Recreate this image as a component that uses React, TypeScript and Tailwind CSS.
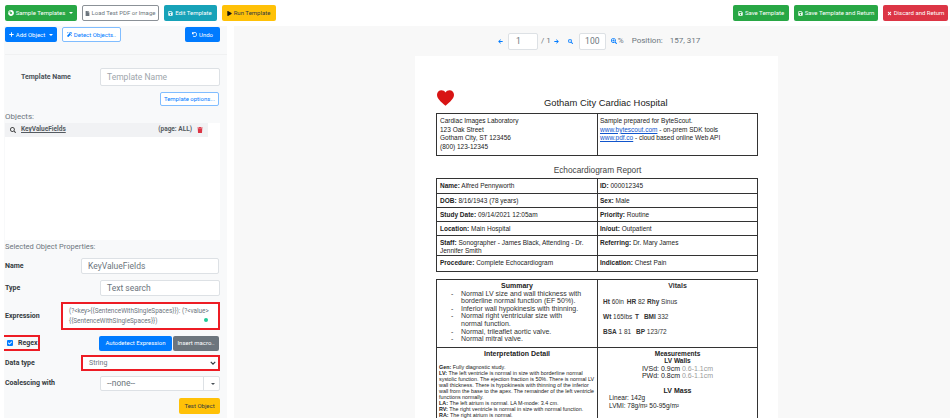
import type { PropsWithChildren, ReactNode } from 'react'
import {
  FaArrowLeft,
  FaArrowRight,
  FaCheck,
  FaCompactDisc,
  FaFile,
  FaMagic,
  FaPlay,
  FaPlus,
  FaSave,
  FaSearch,
  FaSearchMinus,
  FaSearchPlus,
  FaTimes,
  FaTrash,
  FaUndo,
} from 'react-icons/fa'

const caret =
  'ml-[2px] inline-block size-0 border-x-[2px] border-t-[2px] border-x-transparent border-t-current'
const btn =
  'flex items-center justify-center gap-[2px] rounded-[2px] text-[6px] leading-none whitespace-nowrap'
const input =
  'flex items-center rounded-[2px] border border-[#dde1e5] bg-white text-[8.500px] text-[#6c757d]'
const label = 'text-[7px] font-bold text-[#343a40]'
const redBox = 'border-[2px] border-[#ed1c24]'

function PropRow({
  name,
  width,
  className,
  children,
}: PropsWithChildren<{ name: string; width: string; className: string }>) {
  return (
    <div className={`flex items-center ${className}`}>
      <span className={`${label} ${width} shrink-0`}>{name}</span>
      {children}
    </div>
  )
}

function LeftPanel() {
  return (
    <aside className="flex h-[392px] w-[223px] shrink-0 flex-col overflow-hidden bg-[#f8f9fa] pl-[1px] font-['Roboto',sans-serif]">
      <div className="mt-[1px] flex h-[15px] shrink-0 pr-[7px]">
        <button className={`${btn} w-[52px] bg-[#007bff] text-white`}>
          <FaPlus className="size-[5px]" /> Add Object <i className={caret} />
        </button>
        <button className={`${btn} ml-[5px] w-[59px] border border-[#80bdff] bg-white text-[#007bff]`}>
          <FaMagic className="size-[5px]" /> Detect Objects..
        </button>
        <button className={`${btn} ml-auto w-[35px] bg-[#007bff] text-white`}>
          <FaUndo className="size-[5px]" /> Undo
        </button>
      </div>

      <div className="mt-[12px] h-px shrink-0 bg-[#f0f1f2]" />

      <div className="mt-[13px] flex h-[18px] shrink-0 items-center pr-[7px]">
        <span className={`${label} ml-[16px] w-[79px] text-[#495057]`}>Template Name</span>
        <div className={`${input} h-full flex-1 px-[6px] text-[#a0a6ac]`}>Template Name</div>
      </div>
      <div className="mt-[6px] flex h-[14px] shrink-0 justify-end pr-[8px]">
        <button className={`${btn} w-[59px] border border-[#80bdff] bg-white text-[#007bff]`}>
          Template options...
        </button>
      </div>

      <div className="mt-[4px] h-[13px] shrink-0 text-[8px] leading-[13px] text-[#6c757d]">Objects:</div>

      <div className="mr-[7px] h-[117px] shrink-0 bg-white">
        <div className="flex h-[14px] w-[203px] items-center bg-[#f1f2f4] pl-[5px] pr-[5px] text-[6.500px] font-bold text-[#555b61]">
          <FaSearch className="size-[6px] text-[#444]" />
          <span className="ml-[5px] underline">KeyValueFields</span>
          <span className="ml-auto">(page: ALL)</span>
          <FaTrash className="ml-[5px] size-[6px] text-[#dc3545]" />
        </div>
      </div>

      <div className="mt-[1px] h-[12px] shrink-0 text-[7.500px] leading-[12px] text-[#6c757d]">
        Selected Object Properties:
      </div>

      <PropRow name="Name" width="w-[76px]" className="mt-[5px] h-[16px] shrink-0 pr-[8px]">
        <div className={`${input} h-full flex-1 px-[6px]`}>KeyValueFields</div>
      </PropRow>
      <PropRow name="Type" width="w-[95px]" className="mt-[6px] h-[16px] shrink-0 pr-[7px]">
        <div className={`${input} h-full flex-1 bg-[#e9ecef] px-[6px]`}>Text search</div>
      </PropRow>

      <PropRow name="Expression" width="w-[56px]" className="mt-[6px] h-[28px] shrink-0 pr-[7px]">
        <div className={`${redBox} relative h-full flex-1 bg-white py-[3px] pl-[6px] text-[6.400px] leading-[9.500px] text-[#6c757d]`}>
          {'(?<key>{{SentenceWithSingleSpaces}}): (?<value>'}
          <br />
          {'{{SentenceWithSingleSpaces}})'}
          <span className="absolute bottom-[6px] right-[10px] size-[4px] rounded-full bg-[#20c997]" />
        </div>
      </PropRow>

      <div className="mt-[5px] flex h-[16px] shrink-0 items-center pr-[7px]">
        <div className={`${redBox} -ml-[3px] flex h-[16px] w-[38px] shrink-0 items-center pl-[3px]`}>
          <span className="flex size-[6px] items-center justify-center rounded-[1px] bg-[#007bff] text-white">
            <FaCheck className="size-[4px]" />
          </span>
          <span className={`${label} ml-[5px]`}>Regex</span>
        </div>
        <button className={`${btn} ml-[59px] h-[15px] w-[73px] bg-[#007bff] text-white`}>
          Autodetect Expression
        </button>
        <button className={`${btn} ml-[1px] h-[15px] w-[46px] bg-[#6c757d] text-white`}>
          Insert macro..
        </button>
      </div>

      <PropRow name="Data type" width="w-[76px]" className="mt-[4px] h-[16px] shrink-0 pr-[7px]">
        <div className={`${redBox} flex h-full flex-1 items-center justify-between bg-white pl-[6px] pr-[2px] text-[7px] text-[#6c757d]`}>
          String
          <svg viewBox="0 0 8 5" className="h-[4px] w-[6px]" fill="none" stroke="#343a40" strokeWidth="1.6">
            <path d="M1 1l3 3 3-3" />
          </svg>
        </div>
      </PropRow>

      <PropRow name="Coalescing with" width="w-[95px]" className="mt-[5px] h-[15px] shrink-0 pr-[7px]">
        <div className={`${input} h-full flex-1 text-[7px]`}>
          <span className="flex-1 pl-[6px]">--none--</span>
          <span className="flex h-full w-[16px] items-center justify-center border-l border-[#dde1e5]">
            <i className={`${caret} ml-0 text-[#495057]`} />
          </span>
        </div>
      </PropRow>

      <div className="mt-[7px] flex h-[16px] shrink-0 justify-end pr-[7px]">
        <button className={`${btn} w-[41px] bg-[#ffc107] text-[#343a40]`}>Test Object</button>
      </div>
    </aside>
  )
}

function Toolbar() {
  return (
    <div className="flex h-[30px] shrink-0 items-center pl-[264px] font-['Roboto',sans-serif] text-[8px] text-[#6c757d]">
      <FaArrowLeft className="size-[5px] text-[#007bff]" />
      <div className={`${input} ml-[5px] h-[17px] w-[30px] pl-[7px]`}>1</div>
      <span className="ml-[3px]">/ 1</span>
      <FaArrowRight className="ml-[3px] size-[5px] text-[#007bff]" />
      <FaSearchMinus className="ml-[9px] size-[5px] text-[#007bff]" />
      <div className={`${input} ml-[6px] h-[17px] w-[27px] justify-center`}>100</div>
      <FaSearchPlus className="ml-[5px] size-[6px] text-[#007bff]" />
      <span className="ml-[1px]">%</span>
      <span className="ml-[8px]">Position:</span>
      <span className="ml-[7px]">157, 317</span>
    </div>
  )
}

const cell = 'border border-[#333] px-[2px] align-top'

function Field({ k, v }: { k: string; v: ReactNode }) {
  return (
    <>
      <b>{k}:</b> {v}
    </>
  )
}

function PdfPage() {
  const rows: [string, ReactNode, string, ReactNode, string][] = [
    ['Name', 'Alfred Pennyworth', 'ID', '000012345', 'h-[15px]'],
    ['DOB', '8/16/1943 (78 years)', 'Sex', 'Male', 'h-[14px]'],
    ['Study Date', '09/14/2021 12:05am', 'Priority', 'Routine', 'h-[14px]'],
    ['Location', 'Main Hospital', 'In/out', 'Outpatient', 'h-[14px]'],
    ['Staff', 'Sonographer - James Black, Attending - Dr. Jennifer Smith', 'Referring', 'Dr. Mary James', 'h-[20px]'],
    ['Procedure', 'Complete Echocardiogram', 'Indication', 'Chest Pain', 'h-[16px]'],
  ]
  return (
    <div className="ml-[181px] h-[362px] w-[363px] overflow-hidden bg-white pl-[21px] font-['Liberation_Sans',sans-serif] text-[#222]">
      <div className="flex h-[57px] w-[322px] items-end">
        <svg viewBox="0 0 24 22" className="mb-[7px] ml-[1px] h-[16px] w-[17px]" fill="#d81414">
          <path d="M12 22C5 16 0 12 0 6.500 0 2.800 2.800 0 6.300 0 8.600 0 10.800 1.200 12 3.200 13.200 1.200 15.400 0 17.700 0 21.200 0 24 2.800 24 6.500 24 12 19 16 12 22Z" />
        </svg>
        <div className="mb-[4px] ml-[90px] text-[9.400px] leading-[13px]">Gotham City Cardiac Hospital</div>
      </div>

      <table className="w-[322px] table-fixed border-collapse text-[6.500px] leading-[8.700px]">
        <tbody>
          <tr className="h-[42px]">
            <td className={`${cell} w-[161px] pl-[3px] pt-[3px]`}>
              Cardiac Images Laboratory
              <br />
              123 Oak Street
              <br />
              Gotham City, ST 123456
              <br />
              (800) 123-12345
            </td>
            <td className={`${cell} pl-[2px] pt-[3px]`}>
              Sample prepared for ByteScout.
              <br />
              <span className="text-[#1155cc] underline">www.bytescout.com</span> - on-prem SDK tools
              <br />
              <span className="text-[#1155cc] underline">www.pdf.co</span> - cloud based online Web API
            </td>
          </tr>
        </tbody>
      </table>

      <div className="mt-[8px] h-[14px] w-[322px] pl-[1px] text-center text-[8.300px] leading-[12px] text-[#444]">
        Echocardiogram Report
      </div>

      <table className="w-[322px] table-fixed border-collapse text-[6.500px] leading-[7.500px]">
        <tbody>
          {rows.map(([k1, v1, k2, v2, h]) => (
            <tr key={k1} className={h}>
              <td className={`${cell} w-[161px] pl-[3px] pt-[3px]`}>
                <Field k={k1} v={v1} />
              </td>
              <td className={`${cell} pl-[2px] pt-[3px]`}>
                <Field k={k2} v={v2} />
              </td>
            </tr>
          ))}
        </tbody>
      </table>

      <table className="mt-[7px] w-[322px] table-fixed border-collapse text-[6.500px] leading-[7.600px]">
        <tbody>
          <tr className="h-[68px]">
            <td className={`${cell} w-[161px] pt-[2px] text-[7px]`}>
              <div className="text-center font-bold">Summary</div>
              <ul className="text-[#333]">
                {[
                  'Normal LV size and wall thickness with borderline normal function (EF 50%).',
                  'Inferior wall hypokinesis with thinning.',
                  'Normal right ventricular size with normal function.',
                  'Normal, trileaflet aortic valve.',
                  'Normal mitral valve.',
                ].map((it) => (
                  <li key={it} className="flex">
                    <span className="w-[22px] shrink-0 pl-[12px]">-</span>
                    <span className="pr-[12px]">{it}</span>
                  </li>
                ))}
              </ul>
            </td>
            <td className={`${cell} pt-[2px] text-[#333]`}>
              <div className="text-center text-[7px] font-bold">Vitals</div>
              <div className="mt-[8px] pl-[3px]">
                <b>Ht</b> 60in <b className="ml-[1px]">HR</b> 82 <b>Rhy</b> Sinus
              </div>
              <div className="mt-[7.500px] pl-[3px]">
                <b>Wt</b> 165lbs <b className="ml-[1px]">T</b> <b className="ml-[3px]">BMI</b> 332
              </div>
              <div className="mt-[7.500px] pl-[3px]">
                <b>BSA</b> 1 81 <b className="ml-[3px]">BP</b> 123/72
              </div>
            </td>
          </tr>
          <tr>
            <td className={`${cell} h-[80px] pt-[2px]`}>
              <div className="text-center text-[7px] font-bold">Interpretation Detail</div>
              <div className="mt-[6px] whitespace-nowrap text-[5.400px] leading-[6px]">
                <b>Gen:</b> Fully diagnostic study.
                <br />
                <b>LV:</b> The left ventricle is normal in size with borderline normal
                <br />
                systolic function. The ejection fraction is 50%. There is normal LV
                <br />
                wall thickness. There is hypokinesis with thinning of the inferior
                <br />
                wall from the base to the apex. The remainder of the left ventricle
                <br />
                functions normally.
                <br />
                <b>LA:</b> The left atrium is normal. LA M-mode: 3.4 cm.
                <br />
                <b>RV:</b> The right ventricle is normal in size with normal function.
                <br />
                <b>RA:</b> The right atrium is normal.
              </div>
            </td>
            <td className={`${cell} pt-[2px]`}>
              <div className="text-center font-bold leading-[7.300px]">
                Measurements
                <br />
                LV Walls
              </div>
              <div className="text-center text-[7px] leading-[7.600px]">
                IVSd: 0.9cm <span className="text-[#999]">0.6-1.1cm</span>
                <br />
                PWd: 0.8cm <span className="text-[#999]">0.6-1.1cm</span>
              </div>
              <div className="mt-[7px] text-center text-[7px] font-bold">LV Mass</div>
              <div className="pl-[9px]">
                Linear: 142g
                <br />
                LVMI: 78g/m² 50-95g/m²
              </div>
            </td>
          </tr>
        </tbody>
      </table>
    </div>
  )
}

export default function App() {
  return (
    <div className="flex h-[418px] w-[950px] flex-col overflow-hidden bg-white">
      <header className="flex h-[26px] shrink-0 items-center pl-[4.500px] pr-[2px] font-['Roboto',sans-serif]">
        <button className={`${btn} h-[16px] w-[72px] bg-[#28a745] text-white`}>
          <FaCompactDisc className="size-[6px]" /> Sample Templates <i className={caret} />
        </button>
        <button className={`${btn} ml-[5px] h-[16px] w-[77px] border border-[#8b9197] bg-white text-[#6c757d]`}>
          <FaFile className="size-[5px]" /> Load Test PDF or Image
        </button>
        <button className={`${btn} ml-[5px] h-[16px] w-[53px] bg-[#17a2b8] text-white`}>
          <FaSave className="size-[5px]" /> Edit Template
        </button>
        <button className={`${btn} ml-[5px] h-[16px] w-[54px] bg-[#ffc107] text-[#343a40]`}>
          <FaPlay className="size-[5px] text-[#111]" /> Run Template
        </button>
        <button className={`${btn} ml-auto h-[16px] w-[56px] bg-[#28a745] text-white`}>
          <FaSave className="size-[5px]" /> Save Template
        </button>
        <button className={`${btn} ml-[5px] h-[16px] w-[84px] bg-[#28a745] text-white`}>
          <FaSave className="size-[5px]" /> Save Template and Return
        </button>
        <button className={`${btn} ml-[5px] h-[16px] w-[65px] bg-[#dc3545] text-white`}>
          <FaTimes className="size-[5px]" /> Discard and Return
        </button>
      </header>
      <div className="flex min-h-0 flex-1 pl-[4px]">
        <LeftPanel />
        <main className="ml-[7px] flex h-[392px] flex-1 flex-col bg-[#f8f8f8]">
          <Toolbar />
          <PdfPage />
        </main>
      </div>
    </div>
  )
}
